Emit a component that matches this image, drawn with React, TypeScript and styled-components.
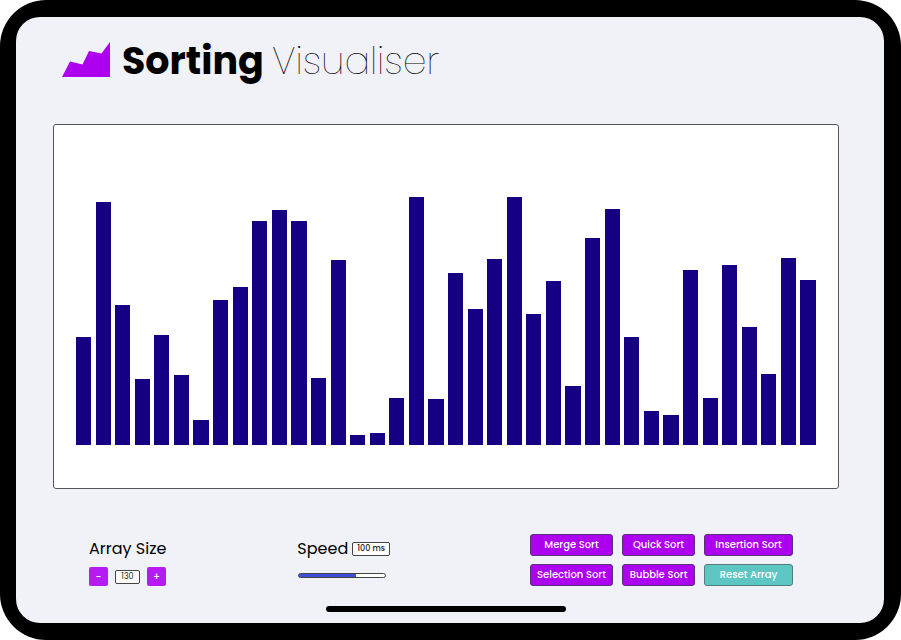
import React, { useState } from "react";
import styled, { createGlobalStyle } from "styled-components";

const GlobalStyle = createGlobalStyle`
  *, *::before, *::after { box-sizing: border-box; }
  body {
    margin: 0;
    background: #fff;
    color: #000;
    font-family: Poppins, Inter, "Open Sans", sans-serif;
  }
  button, input, output { font-family: inherit; }
`;

const Device = styled.div`
  display: flex;
  min-height: 100vh;
  padding: 17px 17px 17px 16px;
  background: #000;
  border-radius: 46px;
`;

const Screen = styled.main`
  display: flex;
  flex: 1;
  flex-direction: column;
  min-width: 0;
  padding: 18px 45px 11px 37px;
  background: #f1f2f8;
  border-radius: 24px;
`;

const Header = styled.header`
  display: flex;
  align-items: center;
  gap: 12px;
  height: 48px;
  padding-left: 9px;
`;

const Logo = styled.svg`
  flex: none;
  width: 48px;
  height: 36px;
`;

const Title = styled.h1`
  margin: 0;
  padding-top: 3px;
  font-size: 38px;
  line-height: 48px;
  font-weight: 700;
  white-space: nowrap;

  span { font-weight: 100; }
`;

const ChartPanel = styled.section`
  display: flex;
  flex: 1;
  min-height: 300px;
  margin-top: 41px;
  padding: 72px 22px 43px;
  background: #fff;
  border: 1px solid #55565a;
  border-radius: 3px;
`;

const Bars = styled.div`
  display: flex;
  flex: 1;
  align-items: flex-end;
  justify-content: space-between;
`;

const Bar = styled.div`
  width: 2.05%;
  background: #150084;
`;

const Controls = styled.section`
  display: flex;
  align-items: flex-start;
  gap: 131px;
  margin-top: 45px;
  padding: 0 46px 0 36px;
`;

const Group = styled.div`
  display: flex;
  flex-direction: column;
  gap: 8px;
  padding-top: 5px;
`;

const Label = styled.label`
  font-size: 16px;
  line-height: 20px;
  white-space: nowrap;
`;

const Row = styled.div<{ $gap: number }>`
  display: flex;
  align-items: center;
  gap: ${(p) => p.$gap}px;
`;

const StepButton = styled.button`
  width: 19px;
  height: 19px;
  padding: 0;
  border: 0;
  border-radius: 2px;
  background: #b51cf2;
  color: #fff;
  font-size: 10px;
  font-weight: 500;
  line-height: 19px;
`;

const SizeInput = styled.input`
  width: 25px;
  height: 14px;
  padding: 0;
  border: 1px solid #444;
  border-radius: 2px;
  background: #fff;
  color: #222;
  font-size: 8px;
  text-align: center;
`;

const SpeedValue = styled.output`
  padding: 0 4px;
  border: 1px solid #444;
  border-radius: 2px;
  background: #fff;
  color: #222;
  font-size: 8px;
  font-weight: 500;
  line-height: 12px;
  white-space: nowrap;
`;

const Slider = styled.input`
  width: 88px;
  height: 5px;
  margin: 6px 0 0 1px;
  border: 1px solid #444;
  border-radius: 3px;
  appearance: none;

  &::-webkit-slider-thumb {
    width: 1px;
    height: 3px;
    appearance: none;
    background: #3f4fd8;
  }
`;

const SortGrid = styled.div`
  display: grid;
  grid-template-columns: 83px 73px 89px;
  gap: 8px 9px;
  margin-left: auto;
`;

const SortButton = styled.button<{ $reset?: boolean }>`
  height: 22px;
  padding: 0;
  border: 1px solid ${(p) => (p.$reset ? "#4f7f80" : "#5c3078")};
  border-radius: 3px;
  background: ${(p) => (p.$reset ? "#5ec6c2" : "#ae00f0")};
  color: #fff;
  font-size: 10px;
  font-weight: 500;
  line-height: 20px;
  white-space: nowrap;
`;

const HomeIndicator = styled.div`
  align-self: center;
  width: 240px;
  height: 6px;
  margin-top: 20px;
  border-radius: 3px;
  background: #000;
`;

const MAX_VALUE = 248;
const VALUES = [
  108, 243, 140, 66, 110, 70, 25, 145, 158, 224, 235, 224, 67, 185, 10, 12, 47, 248, 46,
  172, 136, 186, 248, 131, 164, 59, 207, 236, 108, 34, 30, 175, 47, 180, 118, 71, 187, 165,
];

const ACTIONS = [
  "Merge Sort",
  "Quick Sort",
  "Insertion Sort",
  "Selection Sort",
  "Bubble Sort",
  "Reset Array",
];

export default function App() {
  const [size, setSize] = useState(130);
  const [speed, setSpeed] = useState(100);
  const fill = (speed / 152) * 100;

  return (
    <>
      <GlobalStyle />
      <Device>
        <Screen>
          <Header>
            <Logo viewBox="0 0 48 36" aria-hidden="true">
              <path d="M0 36 8 20.500 20.500 23.500 27 10 39.500 12.500 48 1V36Z" fill="#ae00f0" />
            </Logo>
            <Title>
              Sorting <span>Visualiser</span>
            </Title>
          </Header>

          <ChartPanel aria-label="Array values">
            <Bars>
              {VALUES.map((value, i) => (
                <Bar key={i} style={{ height: `${(value / MAX_VALUE) * 100}%` }} />
              ))}
            </Bars>
          </ChartPanel>

          <Controls>
            <Group>
              <Label htmlFor="size">Array Size</Label>
              <Row $gap={7}>
                <StepButton aria-label="Decrease size" onClick={() => setSize(size - 1)}>-</StepButton>
                <SizeInput
                  id="size"
                  value={size}
                  onChange={(e) => setSize(Number(e.target.value) || 0)}
                />
                <StepButton aria-label="Increase size" onClick={() => setSize(size + 1)}>+</StepButton>
              </Row>
            </Group>

            <Group>
              <Row $gap={4}>
                <Label htmlFor="speed">Speed</Label>
                <SpeedValue htmlFor="speed">{speed} ms</SpeedValue>
              </Row>
              <Slider
                id="speed"
                type="range"
                min={0}
                max={152}
                value={speed}
                onChange={(e) => setSpeed(Number(e.target.value))}
                style={{ background: `linear-gradient(to right, #3f4fd8 ${fill}%, #fff ${fill}%)` }}
              />
            </Group>

            <SortGrid>
              {ACTIONS.map((name) => (
                <SortButton key={name} $reset={name === "Reset Array"}>
                  {name}
                </SortButton>
              ))}
            </SortGrid>
          </Controls>

          <HomeIndicator />
        </Screen>
      </Device>
    </>
  );
}
